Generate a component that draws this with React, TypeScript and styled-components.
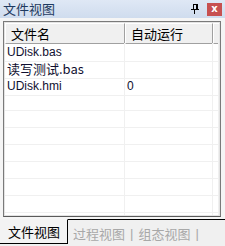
import React from "react";
import styled, { createGlobalStyle } from "styled-components";

const Global = createGlobalStyle`
  html, body { margin: 0; padding: 0; background: #f0f0f0; }
  * { box-sizing: border-box; }
`;

const Panel = styled.div`
  width: 225px;
  height: 246px;
  display: flex;
  flex-direction: column;
  background: #f5f5f5;
  font-family: "Noto Sans CJK SC", "Liberation Sans", sans-serif;
  overflow: hidden;
`;

const TitleBar = styled.div`
  height: 18px;
  display: flex;
  align-items: center;
  padding: 0 3px 0 3px;
  background: linear-gradient(#dfe8f5, #cfdcee);
  color: #1e3a60;
  font-size: 13px;
  line-height: 18px;
`;

const Title = styled.span`
  flex: 1;
`;

const PinIcon = styled.svg`
  width: 10px;
  height: 10px;
  margin-right: 7px;
`;

const CloseBtn = styled.div`
  width: 15px;
  height: 13px;
  background: #c75050;
  color: #fff;
  font-family: "DejaVu Sans", sans-serif;
  font-size: 10px;
  font-weight: bold;
  line-height: 12px;
  text-align: center;
`;

const Frame = styled.div`
  flex: 1;
  margin: 3px 4px 0 3px;
  border: 1px solid #7a7a7a;
  border-bottom-color: #5a5a5a;
  padding: 1px;
  background: #e3e3e3;
  display: flex;
  flex-direction: column;
  overflow: hidden;
`;

const List = styled.div`
  flex: 1;
  background: #fff;
  display: flex;
  flex-direction: column;
  overflow: hidden;
`;

const Header = styled.div`
  display: grid;
  grid-template-columns: 120px 88px 1fr;
  height: 20px;
  flex-shrink: 0;
`;

const HeadCell = styled.div`
  background: #f0f0f0;
  border-top: 1px solid #fff;
  border-left: 1px solid #fff;
  border-right: 1px solid #a0a0a0;
  border-bottom: 1px solid #a0a0a0;
  font-size: 13px;
  line-height: 19px;
  padding-left: 5px;
  color: #000;
  white-space: nowrap;
`;

const Row = styled.div`
  display: grid;
  grid-template-columns: 120px 88px 1fr;
  height: 17px;
  flex-shrink: 0;
`;

const Cell = styled.div<{ $cjk?: boolean }>`
  border-right: 1px solid #f0f0f0;
  border-bottom: 1px solid #f0f0f0;
  font-family: ${(p) =>
    p.$cjk
      ? `"Noto Sans CJK SC", "Liberation Sans", sans-serif`
      : `"Liberation Sans", "DejaVu Sans", sans-serif`};
  font-size: ${(p) => (p.$cjk ? "13px" : "12px")};
  line-height: 18px;
  padding-left: 2px;
  color: #101030;
  white-space: nowrap;
`;

const Tabs = styled.div`
  height: 27px;
  flex-shrink: 0;
  display: flex;
  align-items: stretch;
  background: #f0f0f0;
  margin-top: 2px;
`;

const Tab = styled.div<{ $active?: boolean }>`
  display: flex;
  align-items: center;
  padding: ${(p) => (p.$active ? "0 7px 0 8px" : "0 0 0 5px")};
  font-size: 13px;
  color: ${(p) => (p.$active ? "#000" : "#a8a8a8")};
  background: ${(p) => (p.$active ? "#f3f3f3" : "transparent")};
  border-top: 1px solid ${(p) => (p.$active ? "transparent" : "#000")};
  border-right: ${(p) => (p.$active ? "1px solid #000" : "none")};
  border-bottom: ${(p) => (p.$active ? "1px solid #000" : "none")};
  margin-bottom: ${(p) => (p.$active ? "2px" : "0")};
`;

const TabText = styled.span``;

const Sep = styled.span`
  color: #a8a8a8;
  margin-left: 5px;
  font-family: "Liberation Sans", sans-serif;
`;

const Filler = styled.div`
  flex: 1;
  border-top: 1px solid #000;
`;

const rows: { name: string; cjk?: boolean; auto: string }[] = [
  { name: "UDisk.bas", auto: "" },
  { name: "读写测试.bas", cjk: true, auto: "" },
  { name: "UDisk.hmi", auto: "0" },
];

export default function App() {
  const empty = Array.from({ length: 8 });
  return (
    <>
      <Global />
      <Panel>
        <TitleBar>
          <Title>文件视图</Title>
          <PinIcon viewBox="0 0 10 10">
            <rect x="3" y="0" width="1" height="6" fill="#000" />
            <rect x="3" y="0" width="5" height="1" fill="#000" />
            <rect x="6" y="0" width="2" height="6" fill="#000" />
            <rect x="1" y="5" width="8" height="1" fill="#000" />
            <rect x="4" y="6" width="1" height="4" fill="#000" />
          </PinIcon>
          <CloseBtn>x</CloseBtn>
        </TitleBar>
        <Frame>
          <List>
            <Header>
              <HeadCell>文件名</HeadCell>
              <HeadCell>自动运行</HeadCell>
              <HeadCell />
            </Header>
            {rows.map((r) => (
              <Row key={r.name}>
                <Cell $cjk={r.cjk}>{r.name}</Cell>
                <Cell>{r.auto}</Cell>
                <Cell />
              </Row>
            ))}
            {empty.map((_, i) => (
              <Row key={i}>
                <Cell />
                <Cell />
                <Cell />
              </Row>
            ))}
          </List>
        </Frame>
        <Tabs>
          <Tab $active>
            <TabText>文件视图</TabText>
          </Tab>
          <Tab>
            <TabText>过程视图</TabText>
            <Sep>|</Sep>
          </Tab>
          <Tab>
            <TabText>组态视图</TabText>
            <Sep>|</Sep>
          </Tab>
          <Filler />
        </Tabs>
      </Panel>
    </>
  );
}
